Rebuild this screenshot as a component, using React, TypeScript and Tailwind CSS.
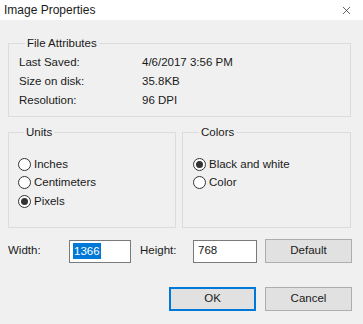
import { X } from "lucide-react";

type RadioProps = {
  label: string;
  checked?: boolean;
};

const Radio = ({ label, checked }: RadioProps) => (
  <div className="flex items-center h-[18.5px]">
    <span className="flex items-center justify-center w-[13px] h-[13px] rounded-full border border-[#333] bg-white">
      {checked && <span className="block w-[7px] h-[7px] rounded-full bg-[#333]" />}
    </span>
    <span className="ml-[3px]">{label}</span>
  </div>
);

const GroupBox = ({
  title,
  className,
  children,
}: {
  title: string;
  className: string;
  children: React.ReactNode;
}) => (
  <fieldset className={`border border-[#dcdcdc] ${className}`}>
    <legend className="ml-[6px] px-[2px] leading-[14px]">{title}</legend>
    {children}
  </fieldset>
);

const Button = ({ label, primary }: { label: string; primary?: boolean }) => (
  <button
    className={`flex items-center justify-center bg-[#e1e1e1] ${
      primary ? "border-2 border-[#0078d7]" : "border border-[#adadad]"
    } w-[87px] h-[24px]`}
  >
    {label}
  </button>
);

export default function App() {
  const attributes = [
    { label: "Last Saved:", value: "4/6/2017 3:56 PM" },
    { label: "Size on disk:", value: "35.8KB" },
    { label: "Resolution:", value: "96 DPI" },
  ];

  return (
    <div className="w-[363px] h-[324px] bg-[#f0f0f0] text-[11.5px] text-[#1a1a1a] font-['Liberation_Sans',sans-serif] overflow-hidden">
      <div className="flex items-center justify-between h-[20px] bg-white pl-[4px] pr-[10px]">
        <span className="text-[12px]">Image Properties</span>
        <X className="w-[13px] h-[13px] text-[#222]" strokeWidth={1.3} />
      </div>

      <div className="px-[8px] pt-[16px]">
        <GroupBox title="File Attributes" className="w-[343px] pl-[10px] pt-[3px] pb-[6px]">
          {attributes.map(({ label, value }) => (
            <div key={label} className="flex items-center h-[19px]">
              <span className="w-[123px]">{label}</span>
              <span>{value}</span>
            </div>
          ))}
        </GroupBox>

        <div className="flex gap-[6px] mt-[8px]">
          <GroupBox title="Units" className="w-[168px] h-[103px] pl-[9px] pt-[16px]">
            <Radio label="Inches" />
            <Radio label="Centimeters" />
            <Radio label="Pixels" checked />
          </GroupBox>
          <GroupBox title="Colors" className="w-[169px] h-[103px] pl-[10px] pt-[16px]">
            <Radio label="Black and white" checked />
            <Radio label="Color" />
          </GroupBox>
        </div>

        <div className="flex items-center mt-[11px] h-[24px]">
          <span className="w-[61px]">Width:</span>
          <div className="flex items-center w-[62px] h-[23px] bg-white border border-[#7a7a7a] px-[3px]">
            <span className="bg-[#0078d7] text-white leading-[16px] px-[1px]">1366</span>
          </div>
          <span className="ml-[9px] w-[53px]">Height:</span>
          <div className="flex items-center w-[64px] h-[23px] bg-white border border-[#7a7a7a] px-[4px]">
            768
          </div>
          <div className="ml-[8px]">
            <Button label="Default" />
          </div>
        </div>

        <div className="flex justify-end gap-[9px] mt-[24px] pr-[3px]">
          <Button label="OK" primary />
          <Button label="Cancel" />
        </div>
      </div>
    </div>
  );
}
